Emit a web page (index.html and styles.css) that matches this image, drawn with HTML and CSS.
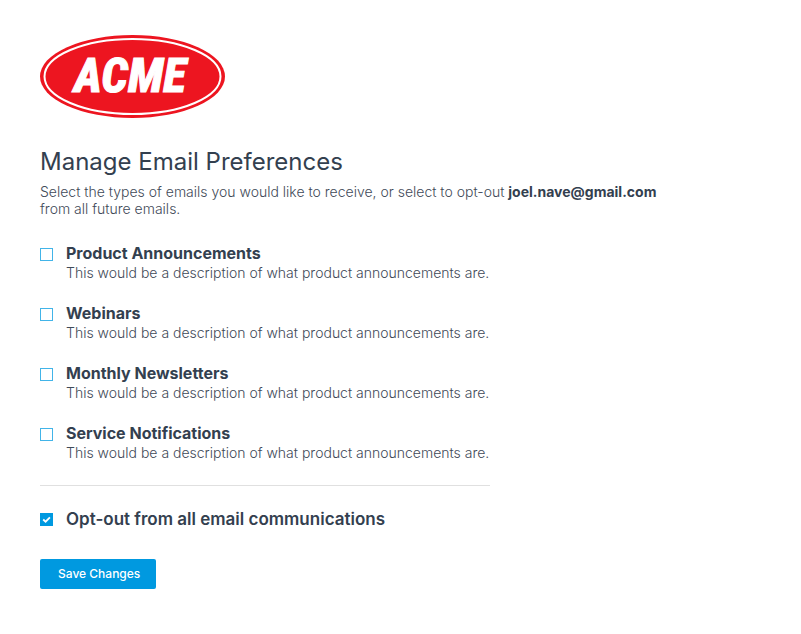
FILE: index.html
```html
<!doctype html>
<html lang="en">
<head>
<meta charset="utf-8">
<title>Manage Email Preferences</title>
<meta name="viewport" content="width=device-width,initial-scale=1">
<link rel="stylesheet" href="styles.css">
</head>
<body>
<main class="page">
  <svg class="logo" viewBox="0 0 185 83" role="img" aria-label="ACME">
    <ellipse class="logo-red" cx="92.5" cy="41.5" rx="92.5" ry="41.5"/>
    <ellipse class="logo-ring" cx="92.5" cy="41.5" rx="88" ry="37.5"/>
    <text class="logo-text" x="90" y="57" text-anchor="middle">ACME</text>
  </svg>

  <h1>Manage Email Preferences</h1>
  <p class="intro">Select the types of emails you would like to receive, or select to opt-out <strong>joel.nave@gmail.com</strong> from all future emails.</p>

  <form>
    <div class="options">
      <div class="option">
        <input type="checkbox" id="product" aria-describedby="product-desc">
        <div>
          <label for="product">Product Announcements</label>
          <p class="desc" id="product-desc">This would be a description of what product announcements are.</p>
        </div>
      </div>
      <div class="option">
        <input type="checkbox" id="webinars" aria-describedby="webinars-desc">
        <div>
          <label for="webinars">Webinars</label>
          <p class="desc" id="webinars-desc">This would be a description of what product announcements are.</p>
        </div>
      </div>
      <div class="option">
        <input type="checkbox" id="newsletters" aria-describedby="newsletters-desc">
        <div>
          <label for="newsletters">Monthly Newsletters</label>
          <p class="desc" id="newsletters-desc">This would be a description of what product announcements are.</p>
        </div>
      </div>
      <div class="option">
        <input type="checkbox" id="service" aria-describedby="service-desc">
        <div>
          <label for="service">Service Notifications</label>
          <p class="desc" id="service-desc">This would be a description of what product announcements are.</p>
        </div>
      </div>
    </div>

    <div class="option optout">
      <input type="checkbox" id="optout" checked>
      <label for="optout">Opt-out from all email communications</label>
    </div>

    <button type="button">Save Changes</button>
  </form>
</main>
</body>
</html>
```

FILE: styles.css
```css
:root{
  --text:#33404f;--sub:#3f4a58;--primary:#0099e0;--box:#42b4e8;--line:#e0e0e0;--logo:#ed1520
}
*{box-sizing:border-box;margin:0;padding:0}
body{background:#fff;color:var(--text);font-family:Inter,"Liberation Sans",Arial,sans-serif}
.page{max-width:720px;padding:35px 40px}
.logo{display:block;width:185px;height:83px}
.logo-red{fill:var(--logo)}
.logo-ring{fill:none;stroke:#fff;stroke-width:2}
.logo-text{fill:#fff;stroke:#fff;stroke-width:1;font:italic 800 48px "Roboto Condensed",Roboto,sans-serif}
h1{margin-top:28px;font-size:24px;line-height:32px;font-weight:400}
.intro{margin-top:5px;max-width:640px;font-size:14px;line-height:17px;font-weight:300;color:var(--sub)}
.intro strong{font-weight:700;color:var(--text)}
.options{max-width:450px;padding-bottom:22px;border-bottom:1px solid var(--line);margin-top:26px;display:flex;flex-direction:column;gap:20px}
.option{display:flex;align-items:flex-start;gap:13px}
.option label{display:block;font-size:16px;line-height:20px;font-weight:700}
.desc{font-size:14px;line-height:20px;font-weight:300;color:var(--sub)}
input{appearance:none;flex:none;width:13px;height:13px;margin-top:5px;border:1px solid var(--box);background:#fff}
input:checked{border-color:var(--primary);background:var(--primary) url("data:image/svg+xml,%3Csvg xmlns='http://www.w3.org/2000/svg' viewBox='0 0 11 11'%3E%3Cpath d='M2.2 5.5l2.4 2.2L8.9 3.4' fill='none' stroke='%23fff' stroke-width='1.8'/%3E%3C/svg%3E")}
.optout{margin-top:23px}
.option.optout label{font-size:17px;font-weight:600}
.optout input{margin-top:4px}
button{margin-top:30px;padding:0 16px 0 18px;height:30px;border:none;border-radius:2px;background:var(--primary);color:#fff;font:500 12px/30px Inter,"Liberation Sans",sans-serif;cursor:pointer}
button:hover{background:#0088c8}
```
